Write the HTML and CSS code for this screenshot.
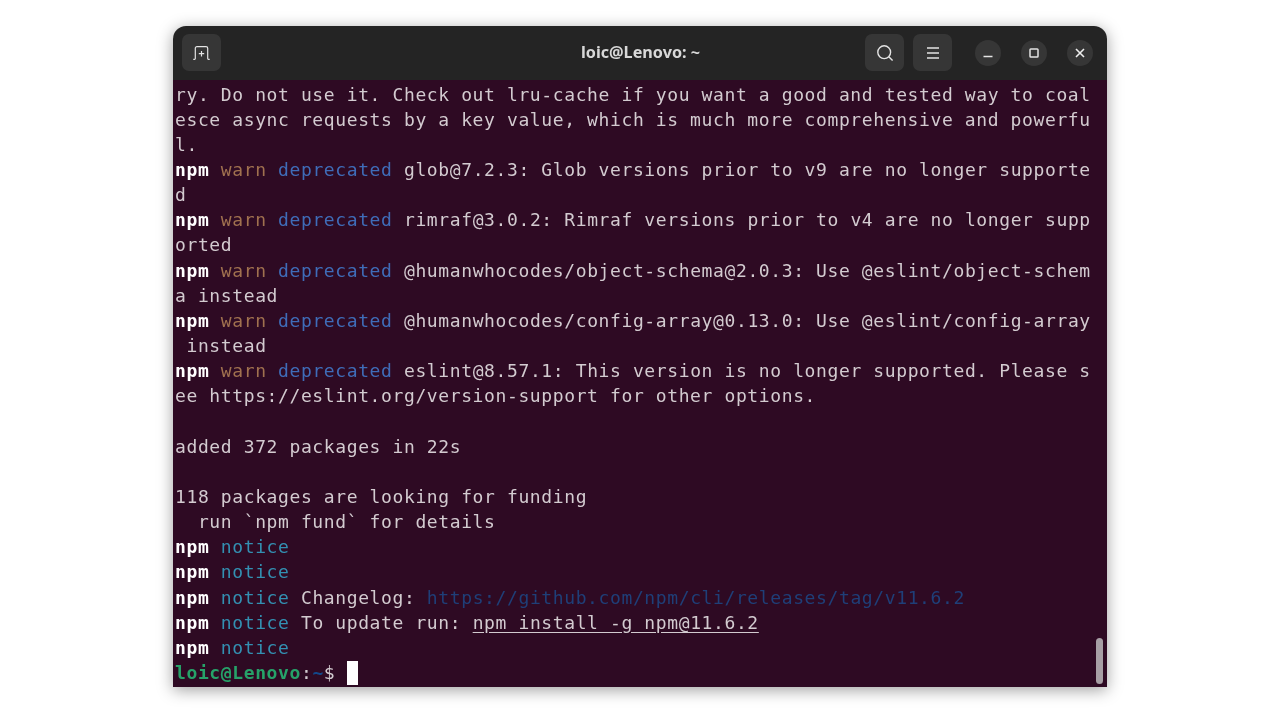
FILE: index.html
```html
<!DOCTYPE html>
<html lang="en">
<head>
<meta charset="utf-8">
<title>loic@Lenovo: ~</title>
<link rel="stylesheet" href="styles.css">
</head>
<body>
<main class="window">
  <header class="titlebar">
    <div class="group">
      <button class="tool" aria-label="New tab">
        <svg width="17" height="14" viewBox="0 0 17 14" fill="none" stroke="#e4e4e4" stroke-width="1.200"><path d="M.3 13.400h1.200c.5 0 .8-.3.8-.8V2.300C2.300 1.300 3 .7 4 .7h9c1 0 1.700.6 1.700 1.600v10.300c0 .5.3.8.8.8h1.200"/><path d="M8.500 5v5.400M5.800 7.700h5.400"/></svg>
      </button>
    </div>
    <h1 class="title">loic@Lenovo: ~</h1>
    <div class="group right">
      <button class="tool" aria-label="Search">
        <svg width="18" height="18" viewBox="0 0 18 18" fill="none" stroke="#e4e4e4" stroke-width="1.400"><circle cx="8.200" cy="8.200" r="6.400"/><path d="M12.800 12.800l3.800 3.800"/></svg>
      </button>
      <button class="tool" aria-label="Menu">
        <svg width="14" height="14" viewBox="0 0 14 14" fill="none" stroke="#e4e4e4" stroke-width="1.300"><path d="M1 2h12M1 7h12M1 12h12"/></svg>
      </button>
      <div class="controls">
        <button class="ctl" aria-label="Minimize"><svg width="12" height="12" viewBox="0 0 12 12" fill="none" stroke="#e4e4e4" stroke-width="1.300"><path d="M1.500 9.500h9"/></svg></button>
        <button class="ctl" aria-label="Maximize"><svg width="12" height="12" viewBox="0 0 12 12" fill="none" stroke="#e4e4e4" stroke-width="1.500"><rect x="2" y="2" width="8" height="8" rx=".8"/></svg></button>
        <button class="ctl" aria-label="Close"><svg width="12" height="12" viewBox="0 0 12 12" fill="none" stroke="#eeeeee" stroke-width="1.600"><path d="M2 2l8 8M10 2l-8 8"/></svg></button>
      </div>
    </div>
  </header>
  <section class="term">
    <div class="screen">
      <div class="ln">ry. Do not use it. Check out lru-cache if you want a good and tested way to coal</div>
      <div class="ln">esce async requests by a key value, which is much more comprehensive and powerfu</div>
      <div class="ln">l.</div>
      <div class="ln"><b>npm</b> <span class="warn">warn</span> <span class="dep">deprecated</span> glob@7.2.3: Glob versions prior to v9 are no longer supporte</div>
      <div class="ln">d</div>
      <div class="ln"><b>npm</b> <span class="warn">warn</span> <span class="dep">deprecated</span> rimraf@3.0.2: Rimraf versions prior to v4 are no longer supp</div>
      <div class="ln">orted</div>
      <div class="ln"><b>npm</b> <span class="warn">warn</span> <span class="dep">deprecated</span> @humanwhocodes/object-schema@2.0.3: Use @eslint/object-schem</div>
      <div class="ln">a instead</div>
      <div class="ln"><b>npm</b> <span class="warn">warn</span> <span class="dep">deprecated</span> @humanwhocodes/config-array@0.13.0: Use @eslint/config-array</div>
      <div class="ln"> instead</div>
      <div class="ln"><b>npm</b> <span class="warn">warn</span> <span class="dep">deprecated</span> eslint@8.57.1: This version is no longer supported. Please s</div>
      <div class="ln">ee https://eslint.org/version-support for other options.</div>
      <div class="ln"> </div>
      <div class="ln">added 372 packages in 22s</div>
      <div class="ln"> </div>
      <div class="ln">118 packages are looking for funding</div>
      <div class="ln">  run `npm fund` for details</div>
      <div class="ln"><b>npm</b> <span class="note">notice</span></div>
      <div class="ln"><b>npm</b> <span class="note">notice</span></div>
      <div class="ln"><b>npm</b> <span class="note">notice</span> Changelog: <span class="link">https://github.com/npm/cli/releases/tag/v11.6.2</span></div>
      <div class="ln"><b>npm</b> <span class="note">notice</span> To update run: <u>npm install -g npm@11.6.2</u></div>
      <div class="ln"><b>npm</b> <span class="note">notice</span></div>
      <div class="ln"><b class="host">loic@Lenovo</b>:<b class="path">~</b>$ <span class="cursor"></span></div>
    </div>
    <div class="thumb"></div>
  </section>
</main>
</body>
</html>
```

FILE: styles.css
```css
* { box-sizing: border-box; }
html, body { margin: 0; height: 100%; }
body {
  background: #ffffff;
  padding-top: 26px;
  overflow: hidden;
}
.window {
  width: 934px;
  height: 661px;
  margin: 0 auto;
  border-radius: 13px 13px 0 0;
  overflow: hidden;
  box-shadow: 0 3px 16px rgba(0, 0, 0, 0.38);
  display: flex;
  flex-direction: column;
  filter: blur(0.35px);
}
.titlebar {
  flex: none;
  height: 54px;
  background: #242424;
  display: grid;
  grid-template-columns: 1fr auto 1fr;
  align-items: center;
  padding: 0 8px 1px 9px;
}
.group { display: flex; align-items: center; gap: 9px; }
.group.right { justify-content: flex-end; }
.title {
  margin: 0 0 1px;
  font: 700 16.200px/20px "Noto Sans", "Liberation Sans", sans-serif;
  color: #d8d8d8;
}
.tool {
  width: 39px;
  height: 37px;
  padding: 0;
  border: 0;
  border-radius: 7px;
  background: #363636;
  display: flex;
  align-items: center;
  justify-content: center;
}
.controls { display: flex; gap: 20px; margin-left: 14px; margin-right: 6px; }
.ctl {
  width: 26px;
  height: 26px;
  padding: 0;
  border: 0;
  border-radius: 50%;
  background: #363636;
  display: flex;
  align-items: center;
  justify-content: center;
}
.term {
  position: relative;
  flex: 1;
  min-height: 0;
  overflow: hidden;
  background: #2e0a23;
  padding: 1.500px 0 0 2px;
}
.screen {
  font-family: "DejaVu Sans Mono", monospace;
  font-size: 18px;
  letter-spacing: 0.61px;
  color: #d3cbd0;
}
.ln { height: 25.170px; line-height: 25.170px; white-space: pre; }
.screen b { color: #ffffff; font-weight: 700; }
.warn { color: #a0714f; }
.dep { color: #3f6cb8; }
.note { color: #3390b2; }
.link { color: #1f3f78; }
.screen b.host { color: #26a269; }
.screen b.path { color: #12488b; }
.screen u { text-underline-offset: 3px; }
.cursor {
  display: inline-block;
  width: 11.500px;
  height: 24px;
  background: #ffffff;
  vertical-align: -6px;
}
.thumb {
  position: absolute;
  right: 4px;
  bottom: 3px;
  width: 7px;
  height: 46px;
  border-radius: 3.500px;
  background: #a79fa5;
}
```
